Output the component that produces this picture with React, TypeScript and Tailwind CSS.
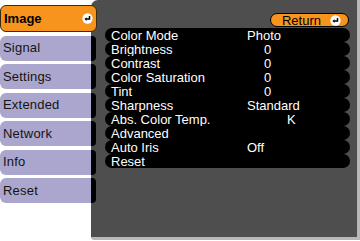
import React from "react";

// Menu data
const tabs = ["Signal", "Settings", "Extended", "Network", "Info", "Reset"];

const rows: { label: string; value?: string; indent?: string }[] = [
  { label: "Color Mode", value: "Photo", indent: "pl-0" },
  { label: "Brightness", value: "0", indent: "pl-[17px]" },
  { label: "Contrast", value: "0", indent: "pl-[17px]" },
  { label: "Color Saturation", value: "0", indent: "pl-[17px]" },
  { label: "Tint", value: "0", indent: "pl-[17px]" },
  { label: "Sharpness", value: "Standard", indent: "pl-0" },
  { label: "Abs. Color Temp.", value: "K", indent: "pl-[40px]" },
  { label: "Advanced" },
  { label: "Auto Iris", value: "Off", indent: "pl-0" },
  { label: "Reset" },
];

const EnterIcon = ({ size = 11 }: { size?: number }) => (
  <svg width={size} height={size} viewBox="0 0 12 12">
    <circle cx="6" cy="6" r="5.6" fill="#fff" />
    <path d="M8.2 3.2 V6.6 H4.6" stroke="#000" strokeWidth="1.6" fill="none" />
    <path d="M2.6 6.6 L5 4.6 V8.6 Z" fill="#000" />
  </svg>
);

const App = () => {
  return (
    <div
      className="flex w-[360px] h-[241px] bg-white overflow-hidden"
      style={{ fontFamily: '"Liberation Sans", Arial, sans-serif' }}
    >
      {/* tab column */}
      <div className="relative z-10 flex flex-col w-[97px] mr-[-6px] pt-[5px] gap-[3.5px] shrink-0">
        <div className="flex items-center justify-between h-[27px] w-[97px] bg-[#f7941d] border border-[#3a2a10] rounded-[6px] pl-[3px] pr-[3px]">
          <span className="text-[13px] font-bold text-black">Image</span>
          <EnterIcon />
        </div>
        {tabs.map((t) => (
          <div key={t} className="flex items-center h-[25px]">
            <div className="flex items-center h-full w-[91px] bg-[#aba6cd] rounded-l-[6px] pl-[3px]">
              <span className="text-[13px] text-[#141414] tracking-[0.2px]">{t}</span>
            </div>
            <div className="h-full w-[5px] bg-black rounded-r-[4px]" />
          </div>
        ))}
      </div>

      {/* settings panel */}
      <div className="flex flex-col w-[269px] h-[240px] bg-[#4e4e4e] rounded-tl-[7px] rounded-bl-[3px] border-r-[3px] border-b-[3px] border-[#b8b8b8]">
        <div className="flex justify-end pt-[13px] pr-[8px]">
          <div className="flex items-center justify-center gap-[9px] w-[79px] h-[14px] bg-[#f7941d] border border-black rounded-full pl-[4px]">
            <span className="text-[13px] leading-none text-black">Return</span>
            <EnterIcon size={11} />
          </div>
        </div>
        <div className="flex flex-col mt-[1px] ml-[14px] mr-[7px]">
          {rows.map((r) => (
            <div
              key={r.label}
              className="flex items-center h-[14px] bg-black rounded-[7px] text-white text-[13px] leading-none"
            >
              <span className="w-[142px] pl-[6px]">{r.label}</span>
              {r.value && <span className={r.indent}>{r.value}</span>}
            </div>
          ))}
        </div>
      </div>
    </div>
  );
};

export default App;
